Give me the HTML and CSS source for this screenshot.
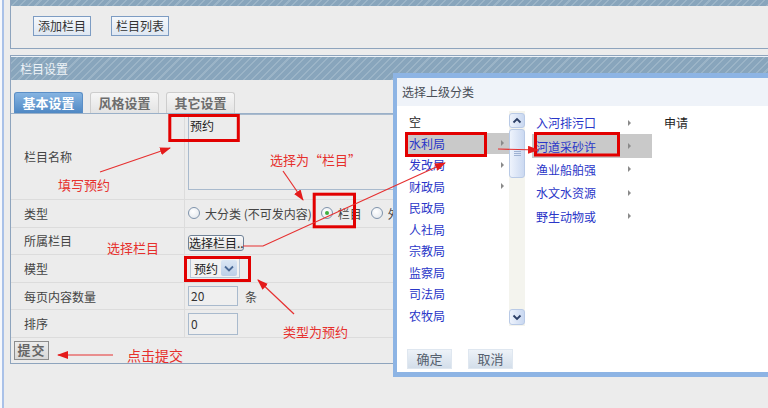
FILE: index.html
```html
<!DOCTYPE html>
<html lang="zh-CN">
<head>
<meta charset="utf-8">
<title>栏目设置</title>
<link rel="stylesheet" href="styles.css">
</head>
<body>
<div class="page">
  <div class="panel top-panel">
    <div class="stripe stripe-thin"></div>
    <div class="toolbar">
      <button class="tb-btn">添加栏目</button>
      <button class="tb-btn">栏目列表</button>
    </div>
  </div>

  <div class="panel main-panel">
    <div class="stripe panel-head">栏目设置</div>
    <div class="tabs">
      <div class="tab active">基本设置</div>
      <div class="tab">风格设置</div>
      <div class="tab">其它设置</div>
    </div>
    <div class="form">
      <div class="row row-tall">
        <div class="label">栏目名称</div>
        <div class="value value-top"><div class="textarea">预约</div></div>
      </div>
      <div class="row">
        <div class="label">类型</div>
        <div class="value">
          <span class="radio"></span><span class="opt">大分类 (不可发内容)</span>
          <span class="radio checked"></span><span class="opt">栏目</span>
          <span class="radio"></span><span class="opt">外</span>
        </div>
      </div>
      <div class="row">
        <div class="label">所属栏目</div>
        <div class="value"><button class="pick-btn">选择栏目..</button></div>
      </div>
      <div class="row">
        <div class="label">模型</div>
        <div class="value">
          <div class="select"><span class="sel-text">预约</span><span class="sel-btn"><svg width="10" height="7" viewBox="0 0 10 7"><path d="M1 1.5 L5 5.5 L9 1.5" fill="none" stroke="#4a6996" stroke-width="1.8"/></svg></span></div>
        </div>
      </div>
      <div class="row">
        <div class="label">每页内容数量</div>
        <div class="value"><div class="input">20</div><span class="unit">条</span></div>
      </div>
      <div class="row">
        <div class="label">排序</div>
        <div class="value"><div class="input input-tall">0</div></div>
      </div>
    </div>
    <button class="submit">提交</button>
  </div>
</div>

<div class="dialog">
  <div class="dlg-title">选择上级分类</div>
  <div class="dlg-body">
    <div class="col col1">
      <div class="item plain">空</div>
      <div class="item sel">水利局<i class="tri"></i></div>
      <div class="item">发改局<i class="tri"></i></div>
      <div class="item">财政局<i class="tri"></i></div>
      <div class="item">民政局</div>
      <div class="item">人社局</div>
      <div class="item">宗教局</div>
      <div class="item">监察局</div>
      <div class="item">司法局</div>
      <div class="item">农牧局</div>
    </div>
    <div class="scrollbar">
      <div class="sb-btn sb-up"><svg width="10" height="7" viewBox="0 0 10 7"><path d="M1.5 5.5 L5 2 L8.5 5.5" fill="none" stroke="#2c3f66" stroke-width="1.8"/></svg></div>
      <div class="sb-thumb"><span class="grip"></span></div>
      <div class="sb-track"></div>
      <div class="sb-btn sb-down"><svg width="10" height="7" viewBox="0 0 10 7"><path d="M1.5 1.5 L5 5 L8.5 1.5" fill="none" stroke="#2c3f66" stroke-width="1.8"/></svg></div>
    </div>
    <div class="col col2">
      <div class="item">入河排污口<i class="tri"></i></div>
      <div class="item sel">河道采砂许<i class="tri"></i></div>
      <div class="item">渔业船舶强<i class="tri"></i></div>
      <div class="item">水文水资源<i class="tri"></i></div>
      <div class="item">野生动物或<i class="tri"></i></div>
    </div>
    <div class="col col3">
      <div class="item plain">申请</div>
    </div>
  </div>
  <div class="dlg-foot">
    <button class="dlg-btn">确定</button>
    <button class="dlg-btn">取消</button>
  </div>
</div>

<svg class="notes" width="768" height="408" viewBox="0 0 768 408">
  <defs>
    <marker id="ah" markerWidth="11" markerHeight="8" refX="10" refY="4" orient="auto" markerUnits="userSpaceOnUse">
      <path d="M0,0 L11,4 L0,8 z" fill="#e41b1b"/>
    </marker>
  </defs>
  <g fill="none" stroke="#e20000" stroke-width="3">
    <rect x="169.8" y="115.5" width="68.5" height="25"/>
    <rect x="314.2" y="194.2" width="40.3" height="32.6"/>
    <rect x="185.5" y="257.5" width="64" height="23"/>
    <rect x="406.5" y="133.5" width="79" height="22"/>
    <rect x="535.5" y="133.5" width="83" height="21.5"/>
  </g>
  <g fill="none" stroke="#e63030" stroke-width="1.2" marker-end="url(#ah)">
    <line x1="100" y1="172" x2="170" y2="148"/>
    <line x1="283" y1="171" x2="303" y2="200"/>
    <polyline points="243,246 263,246 445,163"/>
    <line x1="294" y1="314" x2="258" y2="280"/>
    <line x1="113" y1="355" x2="58" y2="355"/>
    <line x1="498" y1="149" x2="538" y2="150"/>
  </g>
</svg>

<div class="note note-fill">填写预约</div>
<div class="note note-type">选择为“栏目”</div>
<div class="note note-pick">选择栏目</div>
<div class="note note-model">类型为预约</div>
<div class="note note-submit">点击提交</div>
</body>
</html>
```

FILE: styles.css
```css
html, body {
  margin: 0;
  padding: 0;
}
body {
  width: 768px;
  height: 408px;
  overflow: hidden;
  position: relative;
  background: linear-gradient(to right, #f6f8fc 0 2px, #ececec 2px);
  font-family: "Noto Sans CJK SC", "Liberation Sans", sans-serif;
  font-size: 12px;
  color: #333;
}
button {
  font-family: inherit;
  padding: 0;
  cursor: default;
}

.page {
  margin-left: 2px;
  border-left: 2px solid #a9c1e8;
  padding-left: 6px;
  height: 408px;
  box-sizing: border-box;
  overflow: hidden;
}

.stripe {
  background-color: #88a5bc;
  background-image: repeating-linear-gradient(135deg, #88a5bc 0px, #88a5bc 4px, #9bb4c7 4px, #9bb4c7 5.5px);
}

.panel {
  border-left: 1px solid #8ea4bd;
}
.top-panel {
  border-bottom: 1px solid #8ea4bd;
}
.stripe-thin {
  height: 6px;
}
.toolbar {
  display: flex;
  gap: 20px;
  padding: 10px 0 12px 22px;
}
.tb-btn {
  width: 58px;
  height: 20px;
  box-sizing: border-box;
  border: 1px solid #7d9cc3;
  background: linear-gradient(#f5f8fc, #dfe7f1);
  color: #333;
  font-size: 12px;
  line-height: 18px;
}

.main-panel {
  margin-top: 6px;
  border-top: 1px solid #8ea4bd;
  border-bottom: 1px solid #8ea4bd;
  padding-bottom: 3px;
}
.panel-head {
  border-top: 1px solid #eef3f8;
  height: 23px;
  line-height: 23px;
  padding-left: 9px;
  color: #eef3f7;
  font-size: 12px;
}

.tabs {
  display: flex;
  gap: 7px;
  padding: 12px 0 0 3px;
  border-bottom: 1px solid #9ab0c8;
}
.tab {
  width: 69px;
  height: 21px;
  box-sizing: border-box;
  border: 1px solid #cdcdcd;
  border-bottom: none;
  border-radius: 3px 3px 0 0;
  background: linear-gradient(#f6f6f6, #e3e3e3);
  color: #6d6d6d;
  font-weight: 700;
  font-size: 13px;
  line-height: 20px;
  text-align: center;
}
.tab.active {
  border-color: #5a8ec6;
  background: linear-gradient(#86b4e2, #4f88c4);
  color: #fff;
}

.form {
  display: flex;
  flex-direction: column;
}
.row {
  display: flex;
  height: 27.6px;
  box-sizing: border-box;
  border-bottom: 1px solid #dcdcdc;
}
.row-tall {
  height: 86px;
}
.label {
  width: 174px;
  flex: none;
  box-sizing: border-box;
  border-right: 1px solid #dcdcdc;
  padding-left: 13px;
  display: flex;
  align-items: center;
  color: #444;
}
.value {
  flex: 1;
  min-width: 0;
  padding-left: 3px;
  display: flex;
  align-items: center;
  color: #444;
  overflow: hidden;
}
.value-top {
  align-items: flex-start;
}
.textarea {
  width: 300px;
  flex: none;
  height: 76px;
  box-sizing: border-box;
  border: 1px solid #a9bacd;
  padding: 3px 1px;
  line-height: 16px;
  color: #222;
}

.radio {
  width: 12px;
  height: 12px;
  box-sizing: border-box;
  border-radius: 50%;
  border: 1px solid #7f93ab;
  background: radial-gradient(circle at 40% 35%, #ffffff, #dfe4ea);
  margin-right: 5px;
  position: relative;
  flex: none;
}
.radio.checked::after {
  content: "";
  position: absolute;
  left: 3px;
  top: 3px;
  width: 4px;
  height: 4px;
  border-radius: 50%;
  background: #3fae3f;
}
.opt {
  margin-right: 9px;
  white-space: nowrap;
}

.pick-btn {
  width: 56px;
  height: 16px;
  box-sizing: border-box;
  border: 1px solid #6f8196;
  border-radius: 3px;
  background: linear-gradient(#fafafa, #dedede);
  color: #222;
  font-size: 12px;
  line-height: 14px;
  white-space: nowrap;
  overflow: hidden;
  margin-top: 4px;
}

.select {
  margin-left: 2px;
  width: 50px;
  height: 20px;
  box-sizing: border-box;
  border: 1px solid #b8c6d6;
  background: #f2f2f2;
  display: flex;
  align-items: center;
  padding-left: 3px;
  gap: 3px;
}
.sel-text {
  color: #222;
}
.sel-btn {
  width: 16px;
  height: 16px;
  background: linear-gradient(#dbe6f4, #bccfe8);
  border-radius: 2px;
  display: flex;
  align-items: center;
  justify-content: center;
}

.input {
  width: 50px;
  height: 20px;
  box-sizing: border-box;
  border: 1px solid #a9bacd;
  background: #efefef;
  padding-left: 2px;
  line-height: 18px;
  color: #333;
}
.input-tall {
  height: 22px;
  line-height: 20px;
}
.unit {
  margin-left: 7px;
}

.submit {
  display: block;
  margin: 3px 0 0 3px;
  width: 35px;
  height: 19px;
  box-sizing: border-box;
  border: 1px solid #8c8c8c;
  background: linear-gradient(#ececec, #d8d8d8);
  color: #666;
  font-size: 13px;
  font-weight: 700;
  line-height: 16px;
  letter-spacing: 1px;
}

/* dialog overlay */
.dialog {
  position: absolute;
  left: 393px;
  top: 73px;
  width: 375px;
  height: 304px;
  box-sizing: border-box;
  border: 5px solid #8db4e4;
  border-left-width: 4px;
  border-right-width: 0;
  background: #fff;
  z-index: 2;
  overflow: hidden;
}
.dlg-title {
  height: 28px;
  line-height: 28px;
  padding-left: 5px;
  background: #eff3f9;
  color: #4a4f58;
}
.dlg-body {
  display: flex;
  padding-top: 5px;
  height: 215px;
}
.col {
  display: flex;
  flex-direction: column;
}
.col1 {
  margin-left: 8px;
  width: 104px;
}
.col1 .item {
  height: 21.6px;
}
.col2 {
  margin-left: 7px;
  width: 120px;
}
.col2 .item {
  height: 23.4px;
}
.col3 {
  padding-left: 8px;
}
.col3 .item {
  height: 23.4px;
}
.item {
  position: relative;
  display: flex;
  align-items: center;
  padding-left: 4px;
  color: #2a36c8;
  white-space: nowrap;
}
.item.plain {
  color: #1e1e1e;
}
.item.sel {
  background: #c9c9c9;
}
.tri {
  position: absolute;
  left: 96px;
  top: 50%;
  margin-top: -3px;
  width: 0;
  height: 0;
  border-left: 3px solid #8a8a8a;
  border-top: 3px solid transparent;
  border-bottom: 3px solid transparent;
}

.scrollbar {
  width: 16px;
  height: 215px;
  background: #f4f4ee;
  display: flex;
  flex-direction: column;
  flex: none;
}
.sb-btn {
  height: 15px;
  box-sizing: border-box;
  border: 1px solid #b9cae6;
  border-radius: 3px;
  background: linear-gradient(to right, #eef3fc, #c9d8f1);
  display: flex;
  align-items: center;
  justify-content: center;
}
.sb-up {
  margin-top: 2px;
}
.sb-thumb {
  margin-top: 1px;
  height: 49px;
  box-sizing: border-box;
  border: 1px solid #b9cae6;
  border-radius: 3px;
  background: linear-gradient(to right, #eef3fc, #cbd9f1);
  display: flex;
  align-items: center;
  justify-content: center;
}
.grip {
  width: 7px;
  height: 5px;
  border-top: 1px solid #9fb2d3;
  border-bottom: 1px solid #9fb2d3;
  box-sizing: border-box;
  position: relative;
}
.grip::after {
  content: "";
  position: absolute;
  left: 0;
  right: 0;
  top: 1px;
  border-top: 1px solid #9fb2d3;
}
.sb-track {
  flex: 1;
}
.sb-down {
  height: 16px;
  margin-bottom: 1px;
}

.dlg-foot {
  display: flex;
  gap: 16px;
  padding: 23px 0 0 10px;
}
.dlg-btn {
  width: 45px;
  height: 20px;
  box-sizing: border-box;
  border: 1px solid #dfe7f0;
  background: linear-gradient(#edf2f8, #d3deea);
  color: #55606e;
  font-size: 13px;
  line-height: 18px;
}

/* annotations */
.notes {
  position: absolute;
  left: 0;
  top: 0;
  z-index: 3;
  pointer-events: none;
}
.note {
  position: absolute;
  z-index: 4;
  color: #e6302c;
  font-size: 13px;
  line-height: 14px;
  white-space: nowrap;
}
.note-fill { left: 58px; top: 178px; }
.note-type { left: 270px; top: 153px; }
.note-pick { left: 107px; top: 241px; }
.note-model { left: 283px; top: 325px; }
.note-submit { left: 127px; top: 348px; font-size: 14px; }
```
